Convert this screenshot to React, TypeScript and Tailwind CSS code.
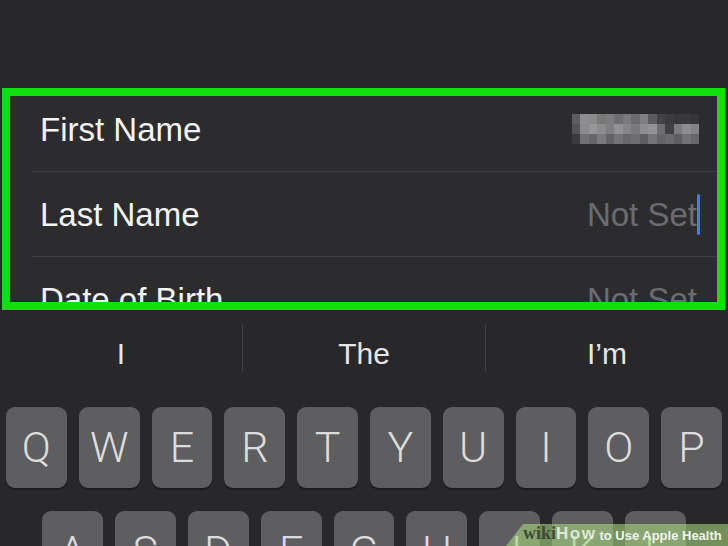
import React from "react";

const blurCells: string[][] = [
  ["bg-[#5e5e60]", "bg-[#8e8e90]", "bg-[#8a8a8c]", "bg-[#787879]", "bg-[#7c7c7e]", "bg-[#6e6e70]", "bg-[#7a7a7c]", "bg-[#6c6c6e]", "bg-[#808082]", "bg-[#5c5c5e]", "bg-[#434345]", "bg-[#3c3c3e]", "bg-[#38383a]", "bg-[#39393b]", "bg-[#353537]"],
  ["bg-[#545456]", "bg-[#8a8a8c]", "bg-[#969698]", "bg-[#8c8c8e]", "bg-[#7e7e80]", "bg-[#929294]", "bg-[#868688]", "bg-[#7a7a7c]", "bg-[#8e8e90]", "bg-[#949496]", "bg-[#6e6e70]", "bg-[#404042]", "bg-[#7c7c7e]", "bg-[#8e8e90]", "bg-[#848486]"],
  ["bg-[#3a3a3c]", "bg-[#707072]", "bg-[#666668]", "bg-[#7a7a7c]", "bg-[#646466]", "bg-[#747476]", "bg-[#68686a]", "bg-[#6e6e70]", "bg-[#5e5e60]", "bg-[#747476]", "bg-[#646466]", "bg-[#6a6a6c]", "bg-[#5e5e60]", "bg-[#727274]", "bg-[#68686a]"],
];

const row1 = ["Q", "W", "E", "R", "T", "Y", "U", "I", "O", "P"];
const row2 = ["A", "S", "D", "F", "G", "H", "J", "K", "L"];

function Key({ k }: { k: string }) {
  return (
    <div
      className="h-[81px] rounded-[9px] bg-[#5e5e60] shadow-[0_2px_0_#1c1c1e] flex items-center justify-center text-[43px] leading-none text-[#dcdcdc] font-light"
      style={{ fontFamily: "Roboto, 'Liberation Sans', sans-serif" }}
    >
      {k}
    </div>
  );
}

export default function App() {
  return (
    <div
      className="relative w-[728px] h-[546px] overflow-hidden bg-[#28282a] flex flex-col"
      style={{ fontFamily: "'Liberation Sans', Arial, sans-serif" }}
    >
      <div className="h-[88px] shrink-0" />
      {/* Green framed form */}
      <div className="ml-[2px] w-[723px] h-[222px] shrink-0 border-[8px] border-[#0ee00e] bg-[#2c2c2e] overflow-hidden">
        <div className="-mt-[9px] flex flex-col">
          <div className="h-[84px] flex items-center justify-between pl-[30px] pr-[18px]">
            <span className="text-[33px] leading-none text-[#f4f4f4]">First Name</span>
            <div className="flex flex-col mt-[-1px]">
              {blurCells.map((r, i) => (
                <div key={i} className="flex h-[10px]">
                  {r.map((c, j) => (
                    <div key={j} className={`w-[8.5px] h-full ${c}`} />
                  ))}
                </div>
              ))}
            </div>
          </div>
          <div className="ml-[22px] h-px bg-[#3e3e40]" />
          <div className="h-[84px] flex items-center justify-between pl-[30px] pr-[17px]">
            <span className="text-[33px] leading-none text-[#f4f4f4]">Last Name</span>
            <div className="flex items-center">
              <span className="text-[33px] leading-none text-[#6c6c70]">Not Set</span>
              <div className="w-[3px] h-[41px] bg-[#4b78ef] rounded-sm" />
            </div>
          </div>
          <div className="ml-[22px] h-px bg-[#3e3e40]" />
          <div className="h-[84px] flex items-center justify-between pl-[30px] pr-[20px]">
            <span className="text-[33px] leading-none text-[#f4f4f4]">Date of Birth</span>
            <span className="text-[33px] leading-none text-[#6c6c70]">Not Set</span>
          </div>
        </div>
      </div>

      {/* Suggestions bar */}
      <div className="h-[88px] shrink-0 flex">
        <div className="flex-1 flex items-center justify-center text-[30px] leading-none text-[#e6e6e6]">I</div>
        <div className="w-px h-[48px] mt-[14px] bg-[#444446]" />
        <div className="flex-1 flex items-center justify-center text-[30px] leading-none text-[#e6e6e6]">The</div>
        <div className="w-px h-[48px] mt-[14px] bg-[#444446]" />
        <div className="flex-1 flex items-center justify-center text-[30px] leading-none text-[#e6e6e6]">I’m</div>
      </div>

      {/* Keyboard */}
      <div className="flex flex-col pt-[9px]">
        <div className="grid grid-cols-10 gap-x-[12px] px-[6px]">
          {row1.map((k) => (
            <Key key={k} k={k} />
          ))}
        </div>
        <div className="grid grid-cols-9 gap-x-[12px] pl-[42px] pr-[42px] mt-[23px]">
          {row2.map((k) => (
            <Key key={k} k={k} />
          ))}
        </div>
      </div>

      {/* wikiHow watermark */}
      <div className="absolute right-0 bottom-0 w-[222px] h-[22px] bg-[#a5d67f]/60 [clip-path:polygon(17px_0,100%_0,100%_100%,0_100%)] flex items-end pb-[4px] pl-[17px] leading-none font-bold">
        <span className="text-[18px] text-[#3e4a38]" style={{ fontFamily: "'Liberation Serif', serif" }}>
          wiki
        </span>
        <span className="text-[17px] tracking-[1.5px] text-[#dfe8d6]">How</span>
        <span className="text-[13px] text-[#eef3ea] ml-[3px]">to Use Apple Health</span>
      </div>
    </div>
  );
}
